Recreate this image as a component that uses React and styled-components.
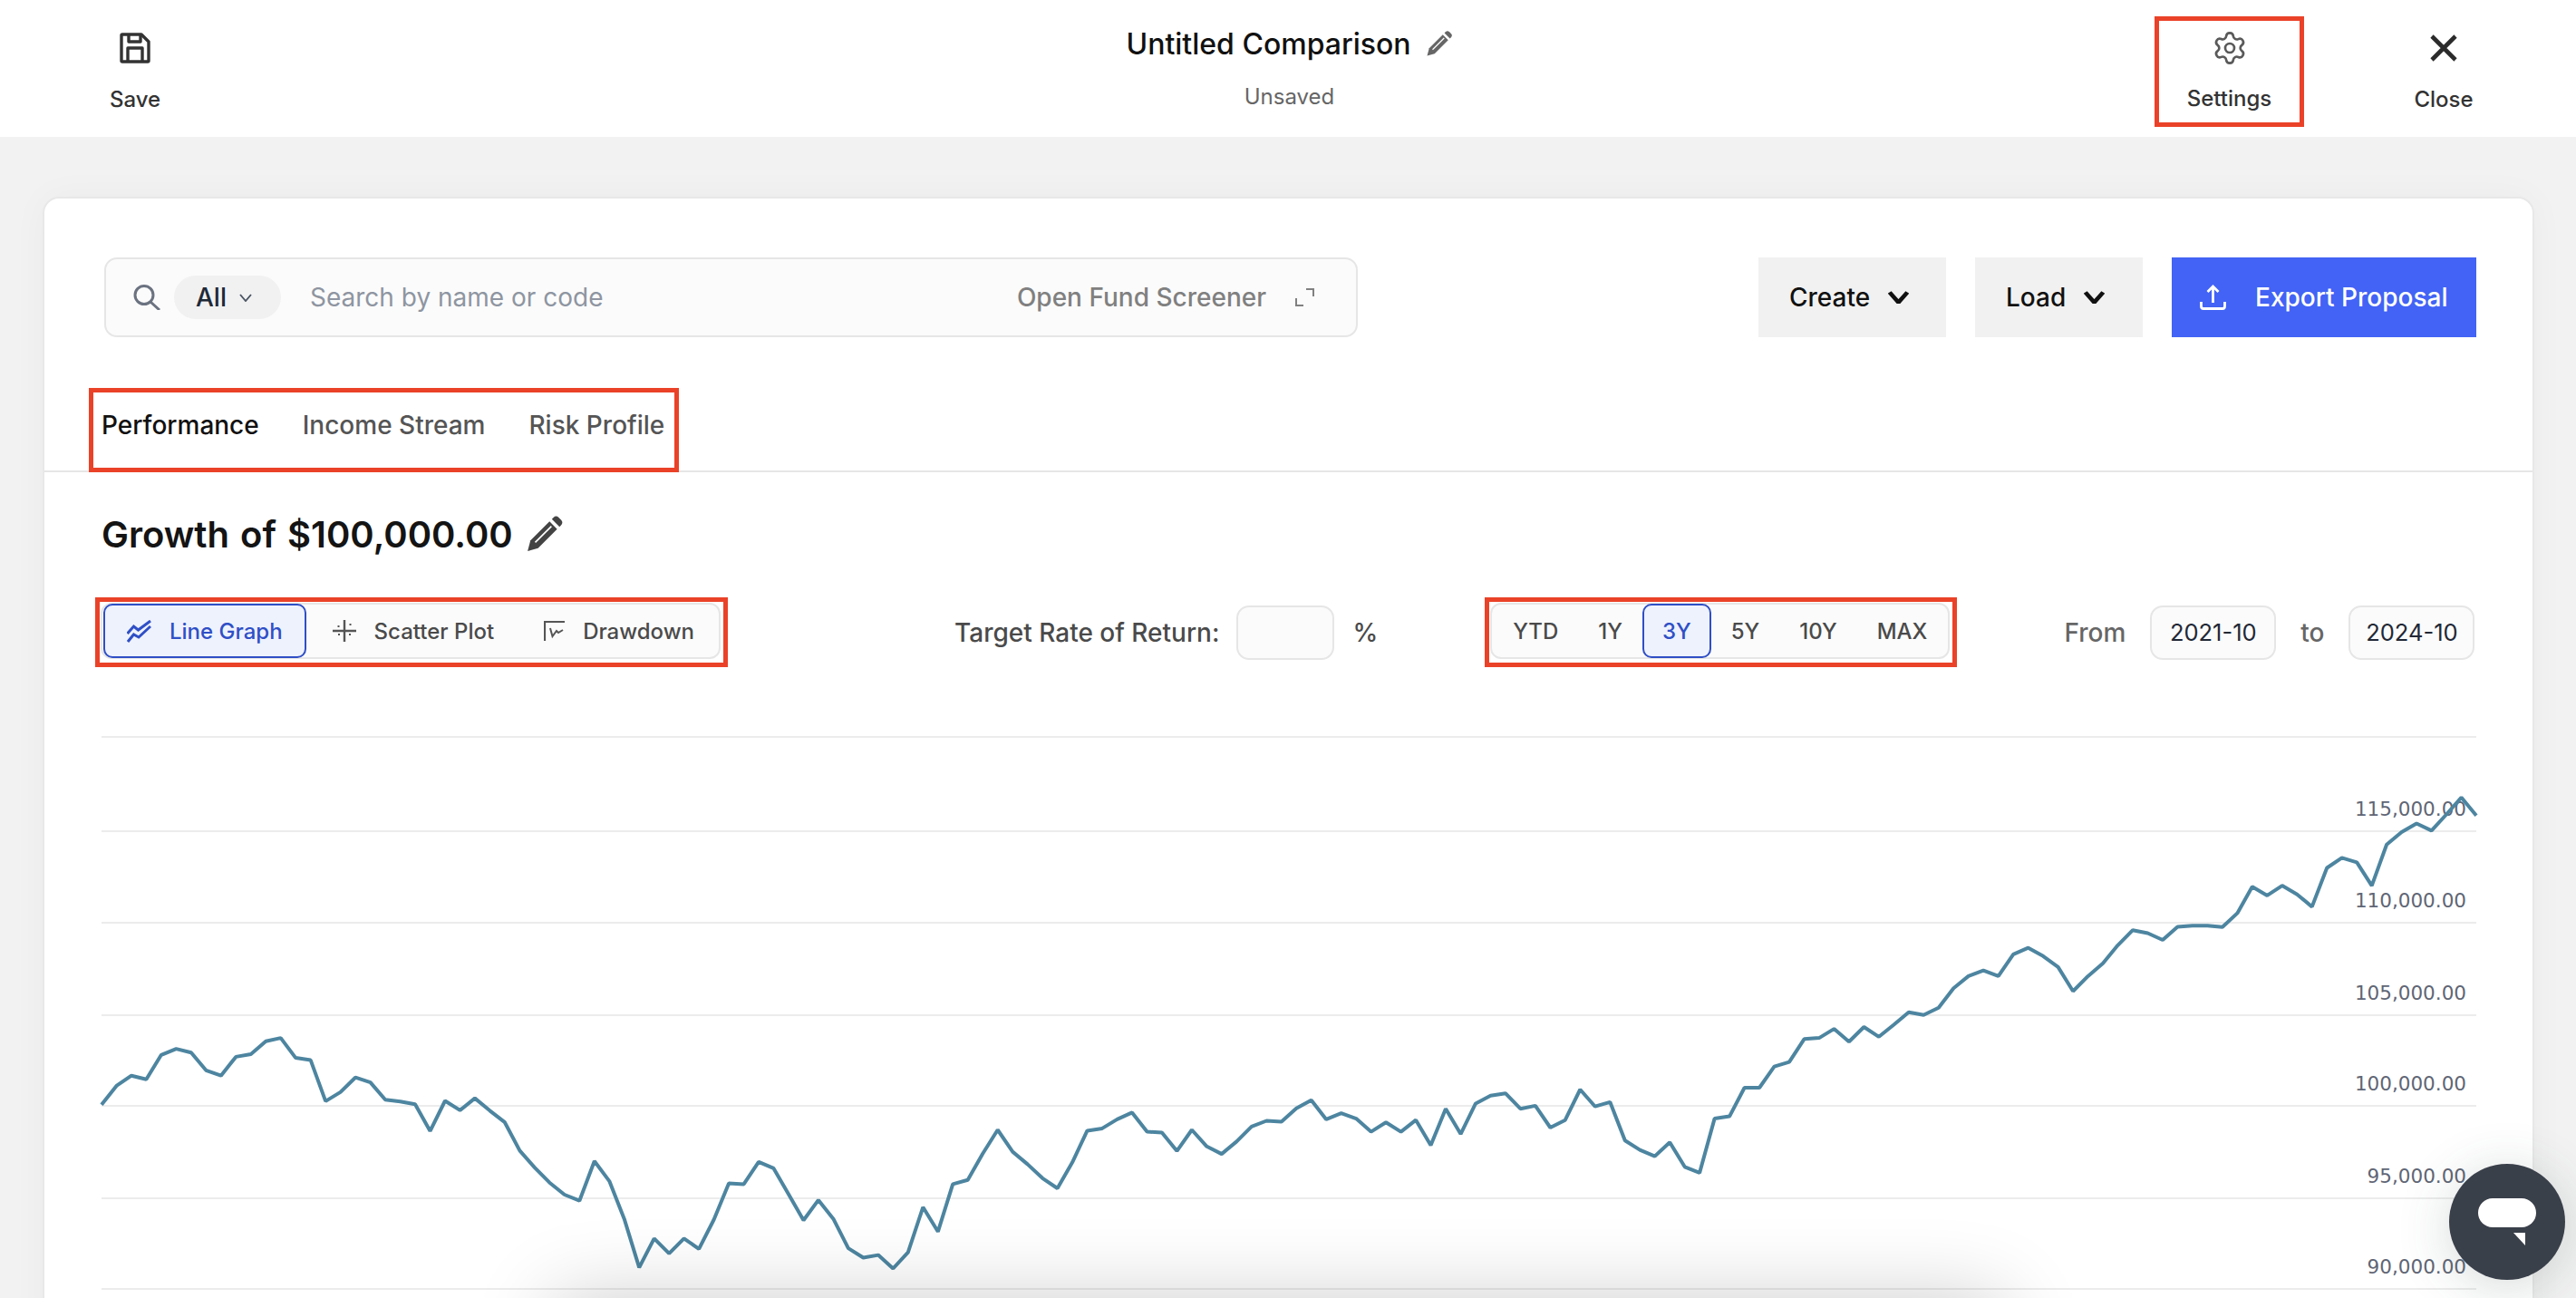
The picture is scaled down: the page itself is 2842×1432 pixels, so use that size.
import React from "react";
import styled, { createGlobalStyle } from "styled-components";
import { Settings } from "lucide-react";

const GlobalStyle = createGlobalStyle`
  html, body {
    margin: 0;
    height: 100%;
    background: #f2f2f2;
    overflow: hidden;
  }
  * {
    box-sizing: border-box;
  }
`;

const SERIES = [
  1055, 1005, 978, 988, 923, 907, 917, 964, 978, 928, 921, 887, 878, 931, 937, 1046, 1022, 983, 996, 1042,
  1047, 1054, 1125, 1045, 1070, 1038, 1071, 1102, 1177, 1222, 1262, 1294, 1310, 1205, 1258, 1358, 1487, 1410,
  1450, 1410, 1438, 1360, 1264, 1266, 1207, 1224, 1293, 1362, 1308, 1358, 1436, 1461, 1454, 1490, 1447, 1327,
  1392, 1266, 1255, 1185, 1122, 1180, 1213, 1250, 1277, 1208, 1124, 1118, 1094, 1076, 1127, 1129, 1178, 1122,
  1166, 1186, 1153, 1113, 1098, 1100, 1065, 1043, 1094, 1078, 1092, 1127, 1102, 1127, 1096, 1163, 1066, 1133,
  1052, 1031, 1025, 1066, 1058, 1116, 1096, 1015, 1060, 1048, 1150, 1175, 1192, 1155, 1220, 1236, 1092, 1086,
  1010, 1010, 954, 942, 881, 878, 854, 888, 849, 875, 843, 810, 817, 798, 746, 714, 699, 714, 656, 639, 661,
  690, 754, 714, 680, 632, 592, 600, 618, 583, 580, 580, 584, 547, 477, 500, 474, 497, 530, 427, 400, 412, 474,
  365, 332, 309, 328, 285, 240, 288,
];

const CHART_WIDTH = 2620;
const GRID = [
  { y: 0 },
  { y: 104, label: "115,000.00" },
  { y: 205, label: "110,000.00" },
  { y: 307, label: "105,000.00" },
  { y: 407, label: "100,000.00" },
  { y: 509, label: "95,000.00" },
  { y: 609, label: "90,000.00" },
];

const linePoints = SERIES.map((v, i) => {
  const x = (i * CHART_WIDTH) / (SERIES.length - 1);
  const y = v / 2.405 - 33;
  return `${x.toFixed(1)},${y.toFixed(1)}`;
}).join(" ");

const Highlight = styled.div`
  border: 5px solid #ea4228;
`;

const Page = styled.div`
  position: relative;
  width: 100%;
  height: 100vh;
  overflow: hidden;
  font-family: Inter, "Liberation Sans", sans-serif;
  background: #f2f2f2;
`;

const Header = styled.header`
  height: 151px;
  background: #fff;
  display: grid;
  grid-template-columns: 1fr auto 1fr;
  padding: 0 101px 0 104px;
`;

const HeaderSide = styled.div`
  display: flex;
  align-items: flex-start;
  justify-content: ${(p) => (p.$end ? "flex-end" : "flex-start")};
`;

const HeaderAction = styled.button`
  width: 90px;
  height: 151px;
  padding: 36px 0 0;
  border: none;
  background: none;
  font: inherit;
  display: flex;
  flex-direction: column;
  align-items: center;
  color: #333;
  font-size: 24px;
  font-weight: 500;
  line-height: 30px;
  svg {
    height: 34px;
    margin: 0 0 25px;
  }
`;

const SettingsBox = styled(Highlight)`
  width: 165px;
  height: 122px;
  margin: 18px 109px 0 0;
  padding-top: 10px;
  display: flex;
  flex-direction: column;
  align-items: center;
  color: #333;
  font-size: 24px;
  font-weight: 500;
  line-height: 30px;
  svg {
    margin-bottom: 21px;
  }
`;

const TitleBlock = styled.div`
  display: flex;
  flex-direction: column;
  align-items: center;
  padding-top: 28px;
`;

const TitleRow = styled.div`
  display: flex;
  align-items: center;
  gap: 16px;
  height: 40px;
  font-size: 32px;
  font-weight: 500;
  color: #111;
`;

const SaveState = styled.div`
  margin-top: 24px;
  font-size: 24px;
  line-height: 30px;
  color: #666;
`;

const Card = styled.main`
  position: absolute;
  top: 217px;
  left: 47px;
  right: 46px;
  height: 1400px;
  background: #fff;
  border: 2px solid #e8e8e8;
  border-bottom: none;
  border-radius: 18px;
  box-shadow: 0 0 40px rgba(0, 0, 0, 0.035);
  padding-top: 65px;
`;

const Toolbar = styled.div`
  display: flex;
  align-items: stretch;
  justify-content: space-between;
  height: 88px;
  padding: 0 62px 0 66px;
`;

const SearchBox = styled.div`
  width: 1383px;
  display: flex;
  align-items: center;
  padding: 0 46px 0 30px;
  background: #fbfbfb;
  border: 2px solid #e6e6e6;
  border-radius: 14px;
`;

const ScopePill = styled.div`
  width: 118px;
  height: 48px;
  margin: 0 32px 0 15px;
  padding-left: 24px;
  display: flex;
  align-items: center;
  gap: 14px;
  border-radius: 24px;
  background: #f1f1f2;
  color: #1f2937;
  font-size: 28px;
  font-weight: 500;
`;

const Placeholder = styled.span`
  font-size: 28px;
  color: #8e95a1;
`;

const ScreenerLink = styled.span`
  margin: 0 32px 0 auto;
  font-size: 28px;
  font-weight: 500;
  color: #808080;
`;

const ToolbarActions = styled.div`
  display: flex;
  gap: 32px;
`;

const ActionButton = styled.button`
  width: ${(p) => p.$width}px;
  display: flex;
  align-items: center;
  gap: ${(p) => (p.$primary ? 32 : 20)}px;
  padding: ${(p) => (p.$primary ? "0 0 0 31px" : "0 0 0 34px")};
  border: none;
  font: inherit;
  font-size: 28px;
  font-weight: 500;
  background: ${(p) => (p.$primary ? "#4263f5" : "#f1f1f1")};
  color: ${(p) => (p.$primary ? "#fff" : "#111")};
`;

const TabRow = styled.nav`
  margin-top: 56px;
  padding-left: 49px;
  height: 93px;
  border-bottom: 2px solid #e6e6e6;
`;

const TabGroup = styled(Highlight)`
  width: 651px;
  height: 93px;
  padding: 0 0 11px 9px;
  display: flex;
  align-items: center;
  gap: 48px;
`;

const Tab = styled.span`
  font-size: 28px;
  font-weight: 500;
  color: ${(p) => (p.$active ? "#111" : "#555")};
`;

const Heading = styled.h2`
  margin: 48px 0 0 63px;
  height: 40px;
  display: flex;
  align-items: center;
  gap: 14px;
  font-size: 40px;
  font-weight: 600;
  word-spacing: 2px;
  color: #141414;
`;

const Controls = styled.div`
  display: flex;
  align-items: center;
  height: 77px;
  margin: 50px 0 0 56px;
`;

const SegmentBox = styled(Highlight)`
  height: 77px;
  padding: 1px 3px 4px 1px;
`;

const SegmentGroup = styled.div`
  height: 62px;
  display: flex;
  gap: ${(p) => p.$gap}px;
  padding: 0 1px;
  background: #fbfbfb;
  border: 2px solid #e6e6e6;
  border-radius: 12px;
  align-items: center;
`;

const Segment = styled.button`
  height: 60px;
  padding: ${(p) => p.$padding};
  display: flex;
  align-items: center;
  gap: 20px;
  font: inherit;
  font-size: 24px;
  font-weight: 500;
  border: 2px solid ${(p) => (p.$active ? "#2f4fc6" : "transparent")};
  border-radius: 10px;
  background: ${(p) => (p.$active ? "#eef2fd" : "transparent")};
  color: ${(p) => (p.$active ? "#2f4fc6" : "#4a4a4a")};
`;

const TargetField = styled.div`
  margin-left: 250px;
  display: flex;
  align-items: center;
  font-size: 28px;
  font-weight: 500;
  color: #4a4a4a;
`;

const TargetInput = styled.div`
  width: 108px;
  height: 60px;
  margin: 0 20px 0 19px;
  background: #fbfbfb;
  border: 2px solid #e6e6e6;
  border-radius: 14px;
`;

const PeriodBox = styled(SegmentBox)`
  margin-left: 118px;
`;

const DateRange = styled.div`
  margin-left: 118px;
  display: flex;
  align-items: center;
  gap: 27px;
  font-size: 28px;
  font-weight: 500;
  color: #666;
`;

const DateInput = styled.div`
  width: 139px;
  height: 60px;
  display: flex;
  align-items: center;
  justify-content: center;
  background: #fbfbfb;
  border: 2px solid #e6e6e6;
  border-radius: 14px;
  font-size: 25.5px;
  font-weight: 400;
  color: #222835;
`;

const Chart = styled.svg`
  display: block;
  margin: 77px 0 0 63px;
  overflow: visible;
`;

const AxisLabel = styled.text`
  font-family: "DejaVu Sans", sans-serif;
  font-size: 21.5px;
  fill: #5f6675;
  text-anchor: end;
`;

const DrawerShadow = styled.div`
  position: absolute;
  top: 100%;
  left: 610px;
  width: 1600px;
  height: 100px;
  box-shadow: 0 0 90px rgba(0, 0, 0, 0.2);
`;

const ChatButton = styled.button`
  position: absolute;
  right: 12px;
  bottom: 20px;
  width: 128px;
  height: 128px;
  padding: 0;
  border: none;
  border-radius: 50%;
  background: #3a404a;
  box-shadow: 0 8px 60px rgba(50, 70, 70, 0.2);
  display: flex;
  align-items: center;
  justify-content: center;
`;

const SaveIcon = () => (
  <svg width="34" height="34" viewBox="0 0 34 34" fill="none" stroke="#333" strokeWidth="3.4" strokeLinejoin="round">
    <path d="M3 2h21l8 8v21a1 1 0 0 1-1 1H3a1 1 0 0 1-1-1V3a1 1 0 0 1 1-1z" />
    <path d="M10 2v8h13V2M9 32V17h16v15" />
  </svg>
);

const CloseIcon = () => (
  <svg width="30" height="30" viewBox="0 0 30 30" fill="none" stroke="#2b2b2b" strokeWidth="4.6">
    <path d="M2 2l26 26M28 2L2 28" />
  </svg>
);

const PencilIcon = ({ size, color }) => (
  <svg width={size} height={size} viewBox="0 0 40 40">
    <path fill={color} d="M2 38l3-11L25 7l8 8-20 20z" />
    <path fill="none" stroke="#fff" strokeWidth="1.6" d="M10 29L27 12" />
    <path fill={color} d="M27.5 4.5l1.6-1.6a4 4 0 0 1 5.6 0l2.4 2.4a4 4 0 0 1 0 5.6l-1.6 1.6z" />
  </svg>
);

const SearchIcon = () => (
  <svg width="30" height="28" viewBox="0 0 30 28" fill="none" stroke="#6b7280" strokeWidth="3">
    <circle cx="12" cy="11.5" r="10" />
    <path d="M19 19l10 9" />
  </svg>
);

const Chevron = ({ width, height, color, weight }) => (
  <svg width={width} height={height} viewBox="0 0 14 10" fill="none" stroke={color} strokeWidth={weight} preserveAspectRatio="none">
    <path d="M1 1l6 8 6-8" />
  </svg>
);

const ExpandIcon = () => (
  <svg width="21" height="20" viewBox="0 0 21 20" fill="none" stroke="#808080" strokeWidth="2">
    <path d="M12 1h8v8M1 11v8h8" />
  </svg>
);

const UploadIcon = () => (
  <svg width="29" height="28" viewBox="0 0 29 28" fill="none" stroke="#fff" strokeWidth="2.8">
    <path d="M1.5 19v5a2.5 2.5 0 0 0 2.5 2.5h21a2.5 2.5 0 0 0 2.5-2.5v-5" />
    <path d="M14.5 20V2M8.5 8l6-6 6 6" />
  </svg>
);

const LineGraphIcon = () => (
  <svg width="27" height="25" viewBox="0 0 27 25" fill="none" stroke="#2f4fc6" strokeWidth="3">
    <path d="M0.5 15l7-8 5 4L26 1M1 24l6.5-8 5.5 3L26 7" />
  </svg>
);

const ScatterIcon = () => (
  <svg width="26" height="24" viewBox="0 0 26 24" fill="none" stroke="#555" strokeWidth="2.4">
    <path d="M0 12h26M13 0v24" />
    <path strokeWidth="2" d="M6.5 6v2M19.5 4v2M19 15v2M7 15v2" />
  </svg>
);

const DrawdownIcon = () => (
  <svg width="23" height="22" viewBox="0 0 23 22" fill="none" stroke="#555" strokeWidth="2.2">
    <path d="M23 1H1v21" />
    <path strokeWidth="2" d="M7 8l2.5 9 4.5-6 2 2 5-3" />
  </svg>
);

const GRAPH_MODES = [
  { label: "Line Graph", icon: <LineGraphIcon />, active: true },
  { label: "Scatter Plot", icon: <ScatterIcon /> },
  { label: "Drawdown", icon: <DrawdownIcon /> },
];

const PERIODS = ["YTD", "1Y", "3Y", "5Y", "10Y", "MAX"];

export default function App() {
  return (
    <Page>
      <GlobalStyle />
      <Header>
        <HeaderSide>
          <HeaderAction>
            <SaveIcon />
            Save
          </HeaderAction>
        </HeaderSide>
        <TitleBlock>
          <TitleRow>
            Untitled Comparison
            <PencilIcon size={30} color="#666" />
          </TitleRow>
          <SaveState>Unsaved</SaveState>
        </TitleBlock>
        <HeaderSide $end>
          <SettingsBox>
            <Settings size={40} color="#5a5a5a" strokeWidth={1.6} />
            Settings
          </SettingsBox>
          <HeaderAction>
            <CloseIcon />
            Close
          </HeaderAction>
        </HeaderSide>
      </Header>

      <Card>
        <Toolbar>
          <SearchBox>
            <SearchIcon />
            <ScopePill>
              All
              <Chevron width={14} height={9} color="#4b5563" weight={1.8} />
            </ScopePill>
            <Placeholder>Search by name or code</Placeholder>
            <ScreenerLink>Open Fund Screener</ScreenerLink>
            <ExpandIcon />
          </SearchBox>
          <ToolbarActions>
            <ActionButton $width={207}>
              Create
              <Chevron width={23} height={14} color="#111" weight={3} />
            </ActionButton>
            <ActionButton $width={185}>
              Load
              <Chevron width={23} height={14} color="#111" weight={3} />
            </ActionButton>
            <ActionButton $primary $width={336}>
              <UploadIcon />
              Export Proposal
            </ActionButton>
          </ToolbarActions>
        </Toolbar>

        <TabRow>
          <TabGroup>
            <Tab $active>Performance</Tab>
            <Tab>Income Stream</Tab>
            <Tab>Risk Profile</Tab>
          </TabGroup>
        </TabRow>

        <Heading>
          Growth of $100,000.00
          <PencilIcon size={42} color="#444" />
        </Heading>

        <Controls>
          <SegmentBox>
            <SegmentGroup $gap={3}>
              {GRAPH_MODES.map((mode) => (
                <Segment key={mode.label} $active={mode.active} $padding="0 24px">
                  {mode.icon}
                  {mode.label}
                </Segment>
              ))}
            </SegmentGroup>
          </SegmentBox>

          <TargetField>
            Target Rate of Return:
            <TargetInput />
            %
          </TargetField>

          <PeriodBox>
            <SegmentGroup $gap={0}>
              {PERIODS.map((period) => (
                <Segment key={period} $active={period === "3Y"} $padding="0 20px">
                  {period}
                </Segment>
              ))}
            </SegmentGroup>
          </PeriodBox>

          <DateRange>
            From
            <DateInput>2021-10</DateInput>
            to
            <DateInput>2024-10</DateInput>
          </DateRange>
        </Controls>

        <Chart width={CHART_WIDTH} height="620" viewBox={`0 0 ${CHART_WIDTH} 620`}>
          {GRID.map((row) => (
            <g key={row.y}>
              <line x1="0" x2={CHART_WIDTH} y1={row.y} y2={row.y} stroke="#ececec" strokeWidth="2" />
              {row.label && (
                <AxisLabel x={CHART_WIDTH - 11} y={row.y - 17}>
                  {row.label}
                </AxisLabel>
              )}
            </g>
          ))}
          <polyline points={linePoints} fill="none" stroke="#4d85a0" strokeWidth="4" strokeLinejoin="bevel" />
        </Chart>
      </Card>

      <DrawerShadow />
      <ChatButton aria-label="Chat">
        <svg width="64" height="52" viewBox="0 0 64 52">
          <rect width="64" height="32" rx="16" fill="#fff" />
          <path d="M39 38h13v14z" fill="#fff" />
        </svg>
      </ChatButton>
    </Page>
  );
}
